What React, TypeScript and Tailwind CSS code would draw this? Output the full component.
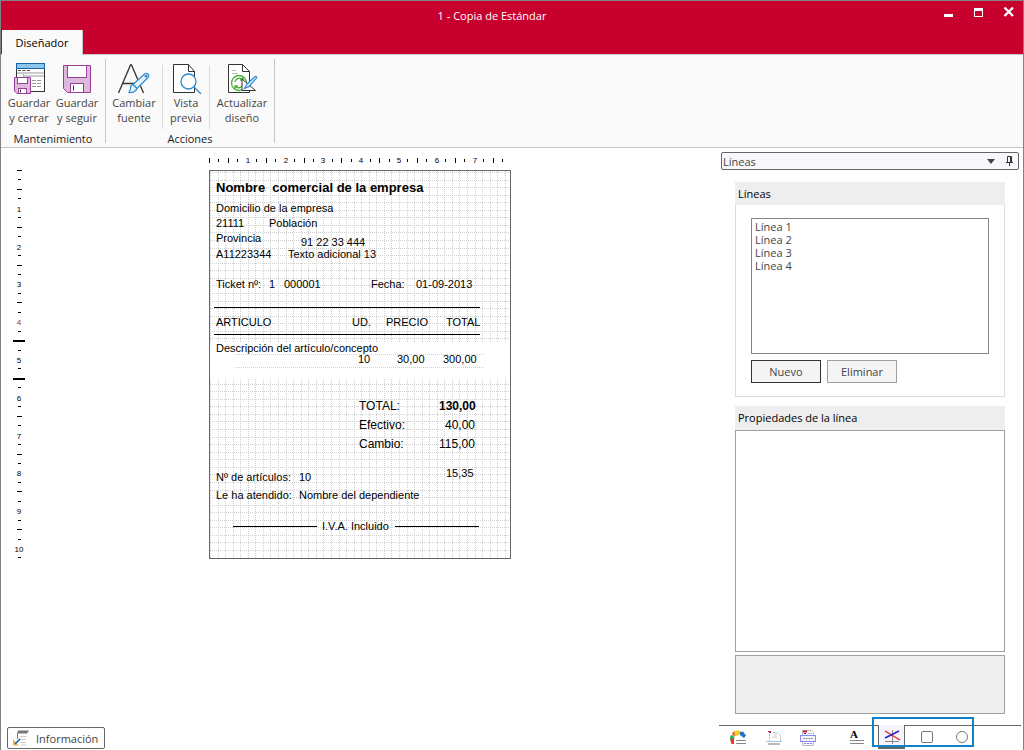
import React from 'react';

type Field = { text: string; x: number; base: number; size?: 'md' | 'lg'; bold?: boolean };

const FIELDS: Field[] = [
  { text: 'Nombre\u00a0 comercial de la empresa', x: 6, base: 21, size: 'lg', bold: true },
  { text: 'Domicilio de la empresa', x: 6, base: 41 },
  { text: '21111', x: 6, base: 56 },
  { text: 'Población', x: 59, base: 56 },
  { text: 'Provincia', x: 6, base: 71 },
  { text: '91 22 33 444', x: 91, base: 75 },
  { text: 'A11223344', x: 6, base: 87 },
  { text: 'Texto adicional 13', x: 78, base: 87 },
  { text: 'Ticket nº:', x: 6, base: 117 },
  { text: '1', x: 59, base: 117 },
  { text: '000001', x: 74, base: 117 },
  { text: 'Fecha:', x: 161, base: 117 },
  { text: '01-09-2013', x: 206, base: 117 },
  { text: 'ARTICULO', x: 6, base: 155 },
  { text: 'UD.', x: 142, base: 155 },
  { text: 'PRECIO', x: 176, base: 155 },
  { text: 'TOTAL', x: 236, base: 155 },
  { text: 'Descripción del artículo/concepto', x: 6, base: 181 },
  { text: '10', x: 148, base: 192 },
  { text: '30,00', x: 187, base: 192 },
  { text: '300,00', x: 233, base: 192 },
  { text: 'TOTAL:', x: 149, base: 239, size: 'md' },
  { text: '130,00', x: 229, base: 239, size: 'md', bold: true },
  { text: 'Efectivo:', x: 149, base: 258, size: 'md' },
  { text: '40,00', x: 235, base: 258, size: 'md' },
  { text: 'Cambio:', x: 149, base: 277, size: 'md' },
  { text: '115,00', x: 229, base: 277, size: 'md' },
  { text: '15,35', x: 236, base: 306 },
  { text: 'Nº de artículos:', x: 6, base: 310 },
  { text: '10', x: 89, base: 310 },
  { text: 'Le ha atendido:', x: 6, base: 328 },
  { text: 'Nombre del dependiente', x: 89, base: 328 },
  { text: 'I.V.A. Incluido', x: 112, base: 359 },
];

const STEP = 7.56;
const TICK = 9.45;

function range(n: number) {
  return Array.from({ length: n }, (_, i) => i);
}

function PaperGrid() {
  const rows = range(51).map((i) => Math.round(1 + i * STEP)).filter((y) => y < 387 && (y < 172 || y > 208));
  return (
    <svg className="absolute inset-0" width="300" height="387" shapeRendering="crispEdges" aria-hidden="true">
      <g stroke="#d0d0d0" strokeDasharray="1 1">
        {range(40).map((i) => {
          const x = Math.round(i * STEP) + 0.5;
          return (
            <React.Fragment key={i}>
              <line x1={x} y1="0" x2={x} y2="172" />
              <line x1={x} y1="208" x2={x} y2="387" />
            </React.Fragment>
          );
        })}
        {rows.map((y) => (
          <line key={y} x1="0" x2="300" y1={y + 0.5} y2={y + 0.5} />
        ))}
        <line x1="25" x2="274" y1="183.5" y2="183.5" />
        <line x1="25" x2="274" y1="196.5" y2="196.5" />
      </g>
      <g fill="#000">
        <rect x="4" y="136" width="266" height="1" />
        <rect x="4" y="163" width="266" height="1" />
        <rect x="23" y="355" width="84" height="1" />
        <rect x="185" y="355" width="84" height="1" />
      </g>
    </svg>
  );
}

function HorizontalRuler() {
  return (
    <svg width="302" height="10" className="block" aria-hidden="true">
      {range(32).map((i) => {
        const x = Math.round(i * TICK);
        if (i % 4 === 0 && i > 0)
          return (
            <text key={i} x={x + 1} y="8" textAnchor="middle" fontSize="8" fontFamily="Liberation Sans, sans-serif">
              {i / 4}
            </text>
          );
        return i % 2 === 0 ? (
          <rect key={i} x={x} y="3" width="1" height="5" />
        ) : (
          <rect key={i} x={x} y="4" width="1" height="3" />
        );
      })}
    </svg>
  );
}

function VerticalRuler() {
  return (
    <svg width="12" height="396" className="block" aria-hidden="true">
      {range(42).map((i) => {
        const y = Math.round(i * TICK) + 1;
        if (i % 4 === 0 && i > 0)
          return (
            <text
              key={i}
              x="6"
              y={y + 4}
              textAnchor="middle"
              fontSize="8"
              fill={i === 16 ? '#a03020' : '#000'}
              fontFamily="Liberation Sans, sans-serif"
            >
              {i / 4}
            </text>
          );
        if (i === 18 || i === 22) return <rect key={i} x="0" y={y} width="12" height="2" />;
        return i % 2 === 0 ? (
          <rect key={i} x="4" y={y} width="5" height="1" />
        ) : (
          <rect key={i} x="5" y={y} width="3" height="1" />
        );
      })}
    </svg>
  );
}

function SaveCloseIcon() {
  return (
    <svg width="32" height="32" viewBox="0 0 32 32" aria-hidden="true">
      <rect x="3.500" y="1.500" width="28" height="28" fill="#fff" stroke="#333" />
      <rect x="3.500" y="1.500" width="28" height="5" fill="#8cc6ef" stroke="#1467a8" />
      <path d="M5 8.500h3M9.500 8.500h3M14 8.500h3" stroke="#555" />
      <path d="M4 11h27M11 14h20" stroke="#b9b9b9" strokeWidth="1.500" />
      <path d="M10.500 11v5" stroke="#b9b9b9" />
      <path d="M19 18.500h10M19 21.500h10M19 24.500h10" stroke="#999" strokeDasharray="4 1" />
      <path d="M1.500 15.500h16v16H4L1.500 29z" fill="#ddb9dc" stroke="#9b3d9b" />
      <rect x="4.500" y="15.500" width="10" height="6" fill="#fff" stroke="#9b3d9b" />
      <rect x="5.500" y="26.500" width="8" height="5" fill="#fff" stroke="#9b3d9b" />
      <path d="M7.500 27.500v3" stroke="#333" />
    </svg>
  );
}

function SaveIcon() {
  return (
    <svg width="32" height="32" viewBox="0 0 32 32" aria-hidden="true">
      <path d="M2.500 3.500h27v27H6.500l-4-4z" fill="#ddb9dc" stroke="#9b3d9b" />
      <rect x="6.500" y="3.500" width="19" height="12" fill="#fff" stroke="#9b3d9b" />
      <rect x="9.500" y="21.500" width="13" height="9" fill="#fff" stroke="#9b3d9b" />
      <path d="M12.500 23.500v5" stroke="#333" />
    </svg>
  );
}

function FontIcon() {
  return (
    <svg width="32" height="32" viewBox="0 0 32 32" aria-hidden="true">
      <path d="M.5 31 12.500 3h1L25.500 31M5 21.500h16" fill="none" stroke="#333" strokeWidth="1.300" />
      <g fill="#e6f3fc" stroke="#2e8bcf" strokeWidth="1.200">
        <path d="M15 22.500 26.500 12q2-1.500 3.500 0t0 3.500L19 26.500z" />
        <circle cx="28" cy="14" r="1" fill="none" />
        <path d="M15 22.500q-3 1-2.500 4.500L11 30.500q6 .5 8-4z" />
      </g>
    </svg>
  );
}

function PreviewIcon() {
  return (
    <svg width="32" height="32" viewBox="0 0 32 32" aria-hidden="true">
      <path d="M3.500 2.500h15l6 7v21h-21z" fill="#fff" stroke="#333" />
      <path d="M18.500 2.500v7h6" fill="none" stroke="#333" />
      <circle cx="18.500" cy="19.500" r="7.500" fill="#fff" stroke="#2e8bcf" strokeWidth="1.300" />
      <path d="m24 25 7 7" stroke="#2e8bcf" strokeWidth="1.300" />
    </svg>
  );
}

function UpdateIcon() {
  return (
    <svg width="32" height="32" viewBox="0 0 32 32" aria-hidden="true">
      <path d="M2.500 2.500h14l7 7v21h-21z" fill="#fff" stroke="#333" />
      <path d="M16.500 2.500v7h7" fill="none" stroke="#333" />
      <path d="M6 8.500h4M6 11.500h6" stroke="#bbb" />
      <circle cx="13" cy="21" r="7.500" fill="#fff" stroke="#4fae3c" strokeWidth="1.300" />
      <path d="M9 20a4.500 4.500 0 0 1 8-2M17 22a4.500 4.500 0 0 1-8 2M17 15v3h-3M9 27v-3h3" fill="none" stroke="#4fae3c" strokeWidth="1.300" />
      <path d="M16 17v11.500h13.500z" fill="#fff" stroke="#333" />
      <path d="m21 22 8-7.500q2-.5 1.500 1.500L23 24.500l-4.500 2z" fill="#d7ecfb" stroke="#2e8bcf" strokeWidth="1.200" />
    </svg>
  );
}

function RibbonButton({ icon, lines, className }: { icon: React.ReactNode; lines: [string, string]; className: string }) {
  return (
    <button type="button" className={`flex flex-col items-center gap-px text-[11px] leading-[15px] text-[#444] ${className}`}>
      {icon}
      <span className="block whitespace-nowrap">
        {lines[0]}
        <br />
        {lines[1]}
      </span>
    </button>
  );
}

function Ribbon() {
  return (
    <div className="flex h-[93px] shrink-0 border-b border-[#c6c6c6] bg-[#fafafa] pt-1 pb-1 pl-1">
      <div className="flex flex-col border-r border-[#c6c6c6]">
        <div className="flex h-[75px] pt-[3px] pb-[2px]">
          <RibbonButton className="w-12" icon={<SaveCloseIcon />} lines={['Guardar', 'y cerrar']} />
          <RibbonButton className="w-12" icon={<SaveIcon />} lines={['Guardar', 'y seguir']} />
          <div className="w-1" />
        </div>
        <div className="pr-1 text-center text-[11px] leading-[9px] text-[#222]">Mantenimiento</div>
      </div>
      <div className="flex flex-col border-r border-[#c6c6c6]">
        <div className="flex h-[75px] pt-[3px] pb-[2px]">
          <RibbonButton className="w-14" icon={<FontIcon />} lines={['Cambiar', 'fuente']} />
          <div className="my-[3px] w-px bg-[#dadada]" />
          <RibbonButton className="w-[46px]" icon={<PreviewIcon />} lines={['Vista', 'previa']} />
          <div className="my-[3px] w-px bg-[#dadada]" />
          <RibbonButton className="w-16" icon={<UpdateIcon />} lines={['Actualizar', 'diseño']} />
        </div>
        <div className="text-center text-[11px] leading-[9px] text-[#222]">Acciones</div>
      </div>
    </div>
  );
}

function TitleBar() {
  return (
    <header className="shrink-0 border-b border-[#c6c6c6] bg-[#c8002d]">
      <div className="flex h-[29px] items-center pr-2 pl-10 text-white">
        <h1 className="flex-1 text-center text-[11px] leading-[15px]">1 - Copia de Estándar</h1>
        <div className="flex items-center gap-[18px] pb-[7px]">
          <button type="button" aria-label="Minimizar" className="flex">
            <svg width="12" height="12"><rect x="1" y="8" width="9" height="3" fill="#fff" /></svg>
          </button>
          <button type="button" aria-label="Maximizar" className="flex">
            <svg width="12" height="12"><path d="M1 2h9v9H1zM2 5v5h7V5z" fill="#fff" fillRule="evenodd" /></svg>
          </button>
          <button type="button" aria-label="Cerrar" className="flex">
            <svg width="12" height="12"><path d="m1.500 1.500 8.500 8.500M10 1.500 1.500 10" stroke="#fff" strokeWidth="2.300" /></svg>
          </button>
        </div>
      </div>
      <nav className="-mb-px flex pl-px">
        <button type="button" className="h-[25px] w-[81px] border-r border-[#c6c6c6] bg-[#fafafa] text-[11px] leading-[15px] text-black">
          Diseñador
        </button>
      </nav>
    </header>
  );
}

function Paper() {
  return (
    <div className="relative h-[389px] w-[302px] border border-[#666] bg-white font-['Liberation_Sans',Arial,sans-serif] text-black">
      <PaperGrid />
      {FIELDS.map((f) => (
        <span
          key={`${f.x}-${f.base}`}
          className={`absolute leading-[14px] whitespace-nowrap ${f.size === 'lg' ? 'text-[13px]' : f.size === 'md' ? 'text-[12px]' : 'text-[11px]'} ${f.bold ? 'font-bold' : ''}`}
          style={{ left: f.x, top: f.base - 11 }}
        >
          {f.text}
        </span>
      ))}
    </div>
  );
}

const TOOLS: { label: string; width: string; icon: React.ReactNode }[] = [
  {
    label: 'Colores',
    width: 'w-9',
    icon: (
      <g>
        <path d="M0 8q0-3 2-3l2.500 2L4 9.500 0 10z" fill="#35a853" />
        <path d="M0 9h4v5H1.500z" fill="#e33b2e" />
        <path d="M2 4q1-3 4-3v4L4.500 6.500z" fill="#e0542e" />
        <path d="M4 2q4-3.500 7 0L9.500 5 5 6z" fill="#f5ce2c" />
        <path d="m10 2 3-.5 3 4-2 2.500-4-3z" fill="#2277bd" />
        <path d="M6 10.500h10M6 13.500h10" stroke="#888" />
      </g>
    ),
  },
  {
    label: 'Página',
    width: 'w-[34px]',
    icon: (
      <g fill="none">
        <path d="M2 1.500h3" stroke="#e02020" />
        <path d="M3 2.500h2" stroke="#2233bb" />
        <path d="M7.500 2.500h3l4 3v6M3.500 4v7" stroke="#bbb" strokeDasharray="2 1" />
        <path d="M8 5h3M6 7h5" stroke="#ccc" />
        <path d="M0 11.500h16" stroke="#9cc6ee" />
        <path d="M2 14h12" stroke="#bbb" strokeWidth="2" />
      </g>
    ),
  },
  {
    label: 'Secciones',
    width: 'w-[49px]',
    icon: (
      <g fill="none">
        <path d="M2.500 15.500V.5h9l2 2v13z" stroke="#bbb" />
        <path d="M3 1.500h4" stroke="#d02040" strokeWidth="2" />
        <path d="M4 3.500h2" stroke="#2233bb" />
        <path d="M8 3.500h4" stroke="#bbb" />
        <rect x=".5" y="5.500" width="15" height="6" fill="#f3f1ff" stroke="#8a8af5" />
        <path d="M3 8.500h10" stroke="#aaa" />
        <path d="M4 13.500h9" stroke="#7777dd" strokeDasharray="2 1" />
      </g>
    ),
  },
  {
    label: 'Texto',
    width: 'w-[21px]',
    icon: (
      <g>
        <text x="1" y="8" fontSize="11" fontWeight="bold" fontFamily="Liberation Serif, serif">A</text>
        <path d="M1 10.500h14M1 13.500h14" stroke="#888" />
      </g>
    ),
  },
];

function ToolIcon({ children }: { children: React.ReactNode }) {
  return (
    <svg width="16" height="16" viewBox="0 0 16 16" className="overflow-visible" aria-hidden="true">
      {children}
    </svg>
  );
}

function ToolStrip() {
  return (
    <div className="relative mt-[11px] flex h-[25px] shrink-0 border-t border-[#666] pl-[11px]">
      {TOOLS.map((t) => (
        <button key={t.label} type="button" aria-label={t.label} className={`flex shrink-0 items-start pt-[4px] ${t.width}`}>
          <ToolIcon>{t.icon}</ToolIcon>
        </button>
      ))}
      <button type="button" aria-label="Líneas" className="-mt-px ml-2 flex h-[24px] w-[27px] shrink-0 items-start justify-center border-x border-b-2 border-[#666] bg-[#f5f5fb] pt-[5px]">
        <ToolIcon>
          <path d="M8.500 0v14M1 11.500h14" stroke="#888" />
          <path d="m1 1 15 9" stroke="#ee2222" strokeWidth="1.400" />
          <path d="M1 8 15 1" stroke="#2222cc" strokeWidth="1.400" />
        </ToolIcon>
      </button>
      <button type="button" aria-label="Rectángulos" className="ml-[14px] flex shrink-0 items-start pt-[4px]">
        <ToolIcon>
          <rect x="2.500" y="1.500" width="11" height="11" rx="1.500" fill="#fff" stroke="#777" />
        </ToolIcon>
      </button>
      <button type="button" aria-label="Elipses" className="ml-[19px] flex shrink-0 items-start pt-[4px]">
        <ToolIcon>
          <circle cx="8" cy="7" r="5.500" fill="#fff" stroke="#777" />
        </ToolIcon>
      </button>
      <div className="pointer-events-none absolute -top-[9px] left-[153px] h-[30px] w-[102px] border-2 border-[#0d82c8]" />
    </div>
  );
}

function SidePanel() {
  return (
    <aside className="flex w-[304px] shrink-0 flex-col pr-0.5 pt-1">
      <div className="mr-[2px] ml-0.5 flex h-[18px] shrink-0 items-center rounded-xs border border-[#666] bg-[#f7f7fc] pr-1">
        <div className="relative flex flex-1 items-center">
          <select aria-label="Panel" className="w-full appearance-none bg-transparent pl-px text-[11px] leading-[15px] text-[#444]">
            <option>Líneas</option>
          </select>
          <svg width="8" height="5" className="pointer-events-none absolute right-[10px]" aria-hidden="true">
            <path d="M0 0h8L4 5z" fill="#444" />
          </svg>
        </div>
        <button type="button" aria-label="Fijar panel" className="flex">
          <svg width="9" height="10" viewBox="0 0 9 10" fill="none" stroke="#333" aria-hidden="true">
            <path d="M2.500 6V.5h4V6M5.500 1v5M1 6.500h7M4.500 7v3" />
          </svg>
        </button>
      </div>

      <section className="mx-4 mt-3 shrink-0 border border-t-0 border-[#dcdcdc]">
        <label htmlFor="lineas" className="-mx-px block h-[23px] bg-[#eee] pl-[3px] text-[11px] leading-[24px] text-black">
          Líneas
        </label>
        <div className="px-[15px] pt-[13px] pb-[13px]">
          <select id="lineas" size={8} className="block h-[136px] w-full overflow-hidden border border-[#82858c] bg-white pl-[3px] text-[11px] text-[#444]">
            {[1, 2, 3, 4].map((n) => (
              <option key={n} className="h-[13px] min-h-0 p-0 leading-[13px]">
                Línea {n}
              </option>
            ))}
          </select>
          <div className="mt-[6px] flex gap-[6px] text-[11px] leading-[15px] text-[#444]">
            <button type="button" className="h-[23px] w-[70px] border border-[#333] bg-[#f4f4f4]">Nuevo</button>
            <button type="button" className="h-[23px] w-[70px] border border-[#a0a0a0] bg-[#f4f4f4]">Eliminar</button>
          </div>
        </div>
      </section>

      <section className="mx-4 mt-[9px] flex flex-1 flex-col">
        <h2 className="h-[24px] bg-[#eee] pl-[3px] text-[11px] leading-[24px] text-black">Propiedades de la línea</h2>
        <div className="flex-1 border border-[#a0a0a0] bg-white" />
        <div className="mt-[3px] h-[59px] border border-[#a0a0a0] bg-[#efefef]" />
      </section>

      <ToolStrip />
    </aside>
  );
}

export default function App() {
  return (
    <div className="flex min-h-screen flex-col border-x border-t border-[#828282] bg-white font-['Open_Sans','Noto_Sans',sans-serif]">
      <TitleBar />
      <Ribbon />
      <main className="flex flex-1">
        <div className="flex flex-1 flex-col justify-between">
          <div className="flex pt-[7px]">
            <div className="w-[208px] shrink-0 pt-[14px] pl-3">
              <VerticalRuler />
            </div>
            <div className="flex flex-col gap-[5px]">
              <HorizontalRuler />
              <Paper />
            </div>
          </div>
          <div className="pt-4 pb-px pl-[6px]">
            <button type="button" className="flex h-[22px] w-[98px] items-center gap-[6px] rounded-xs border border-[#666] bg-white pl-[5px] text-[11px] leading-[15px] text-[#444]">
              <svg width="17" height="16" viewBox="0 0 17 16" aria-hidden="true">
                <path d="M5 .5h11l-2 3H4z" fill="#777" />
                <path d="M4.500 3v6" stroke="#777" />
                <path d="M7 6.500h6M7 9.500h6M8 12.500h5M8 15h5" stroke="#ccc" />
                <path d="m0 9 6 6.500H0z" fill="#f0b84c" />
                <path d="m2 14 5-5" stroke="#1e64a0" strokeWidth="1.600" />
              </svg>
              Información
            </button>
          </div>
        </div>
        <SidePanel />
      </main>
    </div>
  );
}
